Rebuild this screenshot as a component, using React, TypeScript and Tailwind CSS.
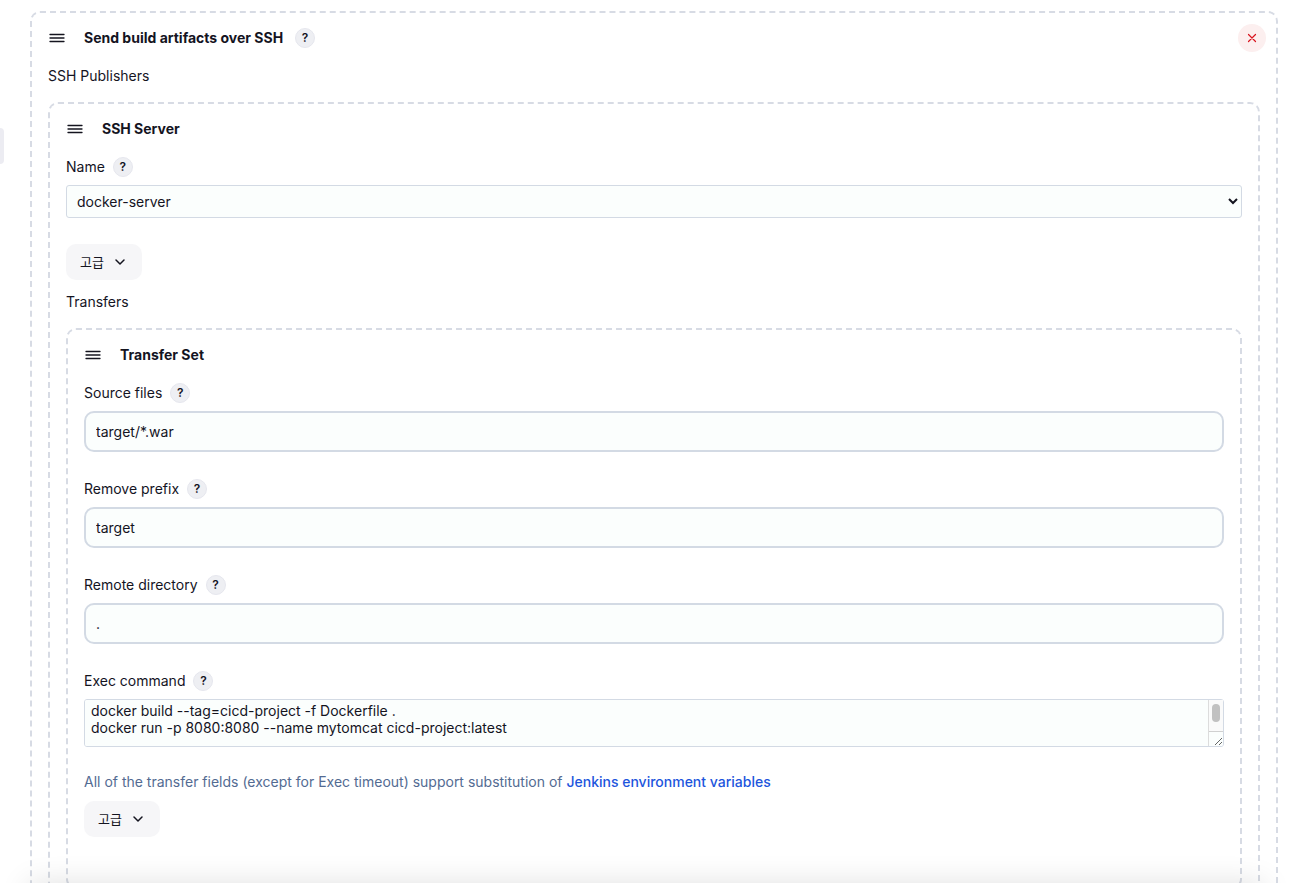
import { useState } from 'react';
import type { ReactNode } from 'react';

interface HelpProps { topic: string; }
interface SectionProps { title: string; help?: boolean; onRemove?: () => void; children: ReactNode; }
interface FieldLabelProps { id: string; text: string; }
interface TextFieldProps { id: string; label: string; value: string; onChange: (value: string) => void; }

function HelpButton({ topic }: HelpProps) {
  return <button type="button" aria-label={`Help for ${topic}`} className="flex h-5 w-5 items-center justify-center rounded-full border border-[#e6e7ee] bg-[#eeeff3] text-xs font-semibold leading-none text-[#14141f]">?</button>;
}

function DragHandle() {
  return <svg viewBox="0 0 18 18" className="h-[18px] w-[18px] shrink-0" fill="none" stroke="#14141f" strokeWidth="1.3" strokeLinecap="round">
    <path d="M2 5.5h14M2 9h14M2 12.5h14" />
  </svg>;
}

function Section({ title, help, onRemove, children }: SectionProps) {
  return <section className="rounded-[10px] border-2 border-dashed border-[#d7dbe4] px-4 pt-[11px] pb-[50px]">
    <div className="mb-3.5 flex h-7 items-center">
      <DragHandle />
      <h2 className="ml-[18px] font-bold">{title}</h2>
      {help && <span className="ml-3"><HelpButton topic={title} /></span>}
      {onRemove && <button type="button" aria-label="Remove" onClick={onRemove} className="-mr-1.5 ml-auto flex h-7 w-7 items-center justify-center rounded-full bg-[#fcefef]">
        <svg viewBox="0 0 10 10" className="h-2.5 w-2.5" fill="none" stroke="#d9141e" strokeWidth="1.2" strokeLinecap="round"><path d="M1.5 1.5l7 7M8.5 1.5l-7 7" /></svg>
      </button>}
    </div>
    {children}
  </section>;
}

function FieldLabel({ id, text }: FieldLabelProps) {
  return <div className="mb-2 flex h-5 items-center gap-2">
    <label htmlFor={id}>{text}</label>
    <HelpButton topic={text} />
  </div>;
}

function TextField({ id, label, value, onChange }: TextFieldProps) {
  return <div className="mb-[27px]">
    <FieldLabel id={id} text={label} />
    <input id={id} type="text" value={value} onChange={event => onChange(event.target.value)} className="block h-[41px] w-full rounded-[10px] border-2 border-[#d3dae4] bg-[#fbfefd] px-2.5 outline-none" />
  </div>;
}

function AdvancedButton() {
  return <button type="button" className="flex h-9 w-[76px] items-center rounded-[10px] bg-[#f6f6f8] pl-3.5 text-[13px]">
    고급
    <svg viewBox="0 0 12 12" className="ml-2.5 h-3 w-3" fill="none" stroke="#14141f" strokeWidth="1.5" strokeLinecap="round" strokeLinejoin="round"><path d="M2 4l4 4 4-4" /></svg>
  </button>;
}

export default function App() {
  const [server, setServer] = useState('docker-server');
  const [sourceFiles, setSourceFiles] = useState('target/*.war');
  const [removePrefix, setRemovePrefix] = useState('target');
  const [remoteDirectory, setRemoteDirectory] = useState('.');
  const [command, setCommand] = useState('docker build --tag=cicd-project -f Dockerfile .\ndocker run -p 8080:8080 --name mytomcat cicd-project:latest\n');
  const [visible, setVisible] = useState(true);

  return <div className="flex h-screen flex-col bg-white pb-1 font-['Inter','Noto_Sans_CJK_KR',sans-serif] text-sm leading-5 text-[#14141f]">
    <div className="relative flex min-h-0 flex-1 overflow-hidden">
      <aside className="w-[30px] shrink-0 pt-32">
        <div className="h-9 w-1 rounded-r-full bg-[#ececf2]" />
      </aside>
      <main className="min-w-0 flex-1 pt-[11px] pr-3.5">
        {visible && <Section title="Send build artifacts over SSH" help onRemove={() => setVisible(false)}>
          <p className="mb-4">SSH Publishers</p>
          <Section title="SSH Server">
            <FieldLabel id="server" text="Name" />
            <select id="server" value={server} onChange={event => setServer(event.target.value)} className="mb-[26px] block h-[33px] w-full rounded-[3px] border border-[#d3dae4] bg-[#fbfefd] pl-1.5 outline-none">
              <option value="docker-server">docker-server</option>
            </select>
            <AdvancedButton />
            <p className="mt-3 mb-4">Transfers</p>
            <Section title="Transfer Set">
              <TextField id="source-files" label="Source files" value={sourceFiles} onChange={setSourceFiles} />
              <TextField id="remove-prefix" label="Remove prefix" value={removePrefix} onChange={setRemovePrefix} />
              <TextField id="remote-directory" label="Remote directory" value={remoteDirectory} onChange={setRemoteDirectory} />
              <FieldLabel id="command" text="Exec command" />
              <div className="relative">
                <textarea
                  id="command"
                  value={command}
                  onChange={event => setCommand(event.target.value)}
                  className="block h-12 w-full resize overflow-y-auto rounded-[3px] border border-[#d3dae4] bg-[#fbfefd] px-1.5 py-0.5 leading-[17px] outline-none"
                />
                {/* always-visible scrollbar, the resize grip stays uncovered below it */}
                <div className="pointer-events-none absolute inset-y-px right-px w-[15px] border-l border-[#dcdcdc]">
                  <div className="flex h-8 justify-center border-b border-[#d0d0d0] bg-[#fafafa] pt-1">
                    <div className="h-[18px] w-2 rounded-full bg-[#c1c1c1]" />
                  </div>
                </div>
              </div>
              <p className="mt-[25px] mb-[9px] text-[#536b92]">All of the transfer fields (except for Exec timeout) support substitution of <a href="#env-vars" className="font-medium text-[#1d55dd]">Jenkins environment variables</a></p>
              <AdvancedButton />
            </Section>
          </Section>
        </Section>}
      </main>
      <div className="pointer-events-none absolute inset-x-7 top-full h-10 shadow-[0_0_30px_rgba(0,0,0,0.12)]" />
    </div>
  </div>;
}
